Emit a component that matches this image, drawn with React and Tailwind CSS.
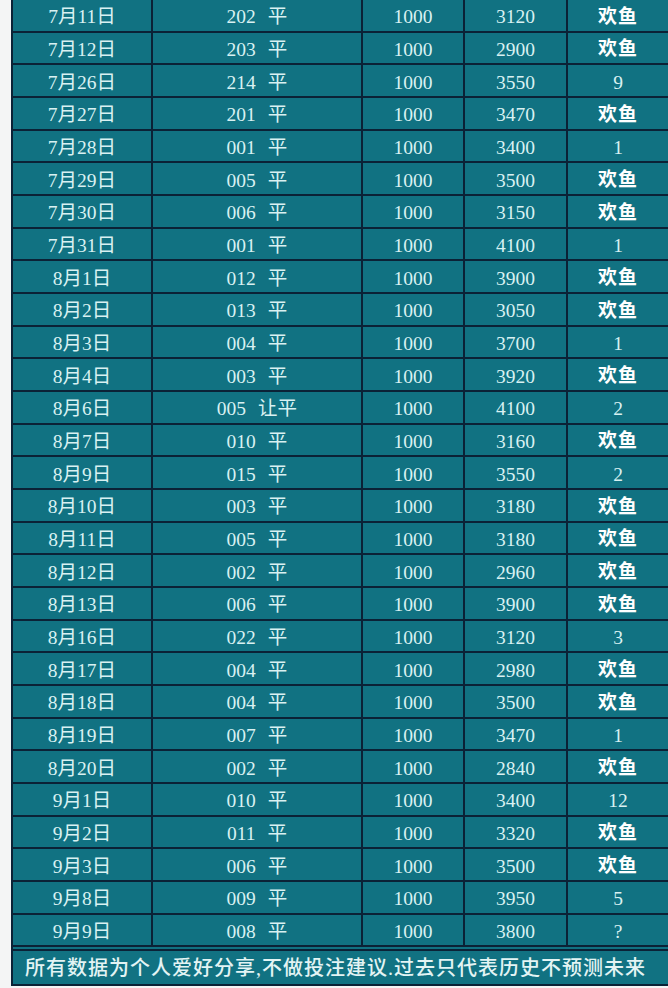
import React from 'react'

const rows = [
  ['7月11日', '202 平', '1000', '3120', '欢鱼'],
  ['7月12日', '203 平', '1000', '2900', '欢鱼'],
  ['7月26日', '214 平', '1000', '3550', '9'],
  ['7月27日', '201 平', '1000', '3470', '欢鱼'],
  ['7月28日', '001 平', '1000', '3400', '1'],
  ['7月29日', '005 平', '1000', '3500', '欢鱼'],
  ['7月30日', '006 平', '1000', '3150', '欢鱼'],
  ['7月31日', '001 平', '1000', '4100', '1'],
  ['8月1日', '012 平', '1000', '3900', '欢鱼'],
  ['8月2日', '013 平', '1000', '3050', '欢鱼'],
  ['8月3日', '004 平', '1000', '3700', '1'],
  ['8月4日', '003 平', '1000', '3920', '欢鱼'],
  ['8月6日', '005 让平', '1000', '4100', '2'],
  ['8月7日', '010 平', '1000', '3160', '欢鱼'],
  ['8月9日', '015 平', '1000', '3550', '2'],
  ['8月10日', '003 平', '1000', '3180', '欢鱼'],
  ['8月11日', '005 平', '1000', '3180', '欢鱼'],
  ['8月12日', '002 平', '1000', '2960', '欢鱼'],
  ['8月13日', '006 平', '1000', '3900', '欢鱼'],
  ['8月16日', '022 平', '1000', '3120', '3'],
  ['8月17日', '004 平', '1000', '2980', '欢鱼'],
  ['8月18日', '004 平', '1000', '3500', '欢鱼'],
  ['8月19日', '007 平', '1000', '3470', '1'],
  ['8月20日', '002 平', '1000', '2840', '欢鱼'],
  ['9月1日', '010 平', '1000', '3400', '12'],
  ['9月2日', '011 平', '1000', '3320', '欢鱼'],
  ['9月3日', '006 平', '1000', '3500', '欢鱼'],
  ['9月8日', '009 平', '1000', '3950', '5'],
  ['9月9日', '008 平', '1000', '3800', '?'],
]

const widths = ['w-[140px]', 'w-[210px]', 'w-[102px]', 'w-[103px]', 'w-[102px]']

function Cell({ value, index }) {
  const isName = value === '欢鱼'
  let content = value
  if (index === 1) {
    const [code, kind] = value.split(' ')
    content = (
      <span>
        {code}
        <span className="ml-3">{kind}</span>
      </span>
    )
  }
  return (
    <div
      className={`${widths[index]} shrink-0 h-full pt-[3px] flex items-center justify-center border-r-2 border-[#0b2236] ${
        isName ? 'text-white font-semibold text-[19px] tracking-[1px]' : 'text-[#d9f1f2] text-[19.5px]'
      }`}
    >
      {content}
    </div>
  )
}

export default function App() {
  return (
    <div className="w-[668px] h-[988px] bg-[#f4f5f5] overflow-hidden">
      <div
        className="ml-[11px] w-[657px] bg-[#117282] border-l-2 border-b-2 border-[#0b2236]"
        style={{ fontFamily: '"Liberation Serif", "Noto Sans CJK SC", serif' }}
      >
        {rows.map((row, i) => (
          <div key={i} className="flex h-[32.68px] border-b-2 border-[#0b2236]">
            {row.map((v, j) => (
              <Cell key={j} value={v} index={j} />
            ))}
          </div>
        ))}
        <div className="h-[4px] border-b-2 border-[#0b2236]" />
        <div className="h-[33px] pr-[10px] flex items-center justify-center text-[#e3f4f4] text-[20px] font-medium tracking-[1px] whitespace-nowrap">
          所有数据为个人爱好分享,不做投注建议.过去只代表历史不预测未来
        </div>
      </div>
    </div>
  )
}
